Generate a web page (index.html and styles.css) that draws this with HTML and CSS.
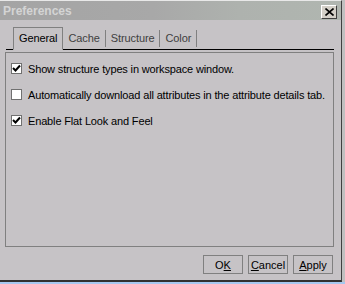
FILE: index.html
```
<html>
  <head>
    <title>Preferences</title>
    <link rel="stylesheet" href="styles.css">
  </head>
  <body>
    <div class="screen">
      <div class="window">
        <div class="titlebar">
          <span class="title">Preferences</span>
          <span class="close">
            <svg width="9" height="8" viewBox="0 0 9 8"><path d="M0.5 0.5 L8.5 7.5 M8.5 0.5 L0.5 7.5" stroke="#000" stroke-width="1.6"/></svg>
          </span>
        </div>

        <div class="tabs">
          <span class="tab selected">General</span>
          <span class="tab">Cache</span>
          <span class="tab">Structure</span>
          <span class="tab">Color</span>
        </div>

        <div class="panel">
          <label class="option">
            <span class="box checked"><svg width="9" height="9" viewBox="0 0 9 9"><path d="M1 4 L3.5 6.5 L8 1.5" fill="none" stroke="#000" stroke-width="2"/></svg></span>
            Show structure types in workspace window.
          </label>
          <label class="option">
            <span class="box"></span>
            Automatically download all attributes in the attribute details tab.
          </label>
          <label class="option">
            <span class="box checked"><svg width="9" height="9" viewBox="0 0 9 9"><path d="M1 4 L3.5 6.5 L8 1.5" fill="none" stroke="#000" stroke-width="2"/></svg></span>
            Enable Flat Look and Feel
          </label>
        </div>

        <div class="buttons">
          <button class="btn ok">O<u>K</u></button>
          <button class="btn"><u>C</u>ancel</button>
          <button class="btn"><u>A</u>pply</button>
        </div>
      </div>
    </div>
  </body>
</html>
```

FILE: styles.css
```
:root {
  --face: #c6c3c6;
  --edge: #808080;
}
html, body {
  margin: 0;
  background: #a6c8f0;
  font-family: 'Liberation Sans', Arial, sans-serif;
  font-size: 11px;
}
.screen {
  width: 345px;
  height: 282px;
  background: #c0c0c0;
}
.window {
  box-sizing: border-box;
  width: 342px;
  height: 282px;
  background: var(--face);
  border-right: 1px solid #404040;
  border-bottom: 2px solid #303030;
  border-top: 1px solid #e8e8e8;
  display: flex;
  flex-direction: column;
}
.titlebar {
  height: 19px;
  display: flex;
  align-items: center;
  justify-content: space-between;
  padding: 0 4px 0 3px;
  background: linear-gradient(to right, #a4a4a4, #a8a8a8 45%, #aeb2ae 70%, #b0b6b0);
}
.title {
  color: #d4d4d4;
  font-weight: bold;
  font-size: 12px;
}
.close {
  box-sizing: border-box;
  width: 16px;
  height: 14px;
  display: flex;
  align-items: center;
  justify-content: center;
  background: #d4d0c8;
  border: 1px solid;
  border-color: #ffffff #404040 #404040 #ffffff;
  margin-top: 2px;
}
.tabs {
  display: flex;
  align-items: flex-end;
  height: 22px;
  margin: 7px 7px 0 6px;
  border-bottom: 1px solid #000;
}
.tab {
  height: 17px;
  line-height: 17px;
  padding: 0 5px;
  color: #404040;
  border-right: 1px solid var(--edge);
  margin-bottom: 2px;
  white-space: nowrap;
  letter-spacing: -0.1px;
}
.tab.selected {
  height: 21px;
  line-height: 20px;
  margin: 0 0 -1px 7px;
  padding: 0 5px;
  border: 1px solid var(--edge);
  border-bottom: 1px solid var(--face);
  background: var(--face);
  color: #000;
}
.panel {
  box-sizing: border-box;
  height: 195px;
  margin: 2px 7px 0 5px;
  border: 1px solid var(--edge);
  padding: 9px 0 0 5px;
  display: flex;
  flex-direction: column;
  gap: 13px;
}
.option {
  display: flex;
  align-items: center;
  gap: 6px;
  height: 13px;
  color: #000;
  white-space: nowrap;
  letter-spacing: -0.15px;
}
.box {
  box-sizing: border-box;
  width: 11px;
  height: 11px;
  background: #fff;
  border: 1px solid #707070;
  display: flex;
  align-items: center;
  justify-content: center;
}
.buttons {
  display: flex;
  justify-content: flex-end;
  gap: 5px;
  margin: 8px 8px 0 0;
}
.btn {
  box-sizing: border-box;
  width: 40px;
  height: 19px;
  padding: 0;
  background: var(--face);
  border: 1px solid var(--edge);
  font-family: inherit;
  font-size: 11px;
  color: #000;
}
.btn u {
  text-underline-offset: 1px;
}
```
